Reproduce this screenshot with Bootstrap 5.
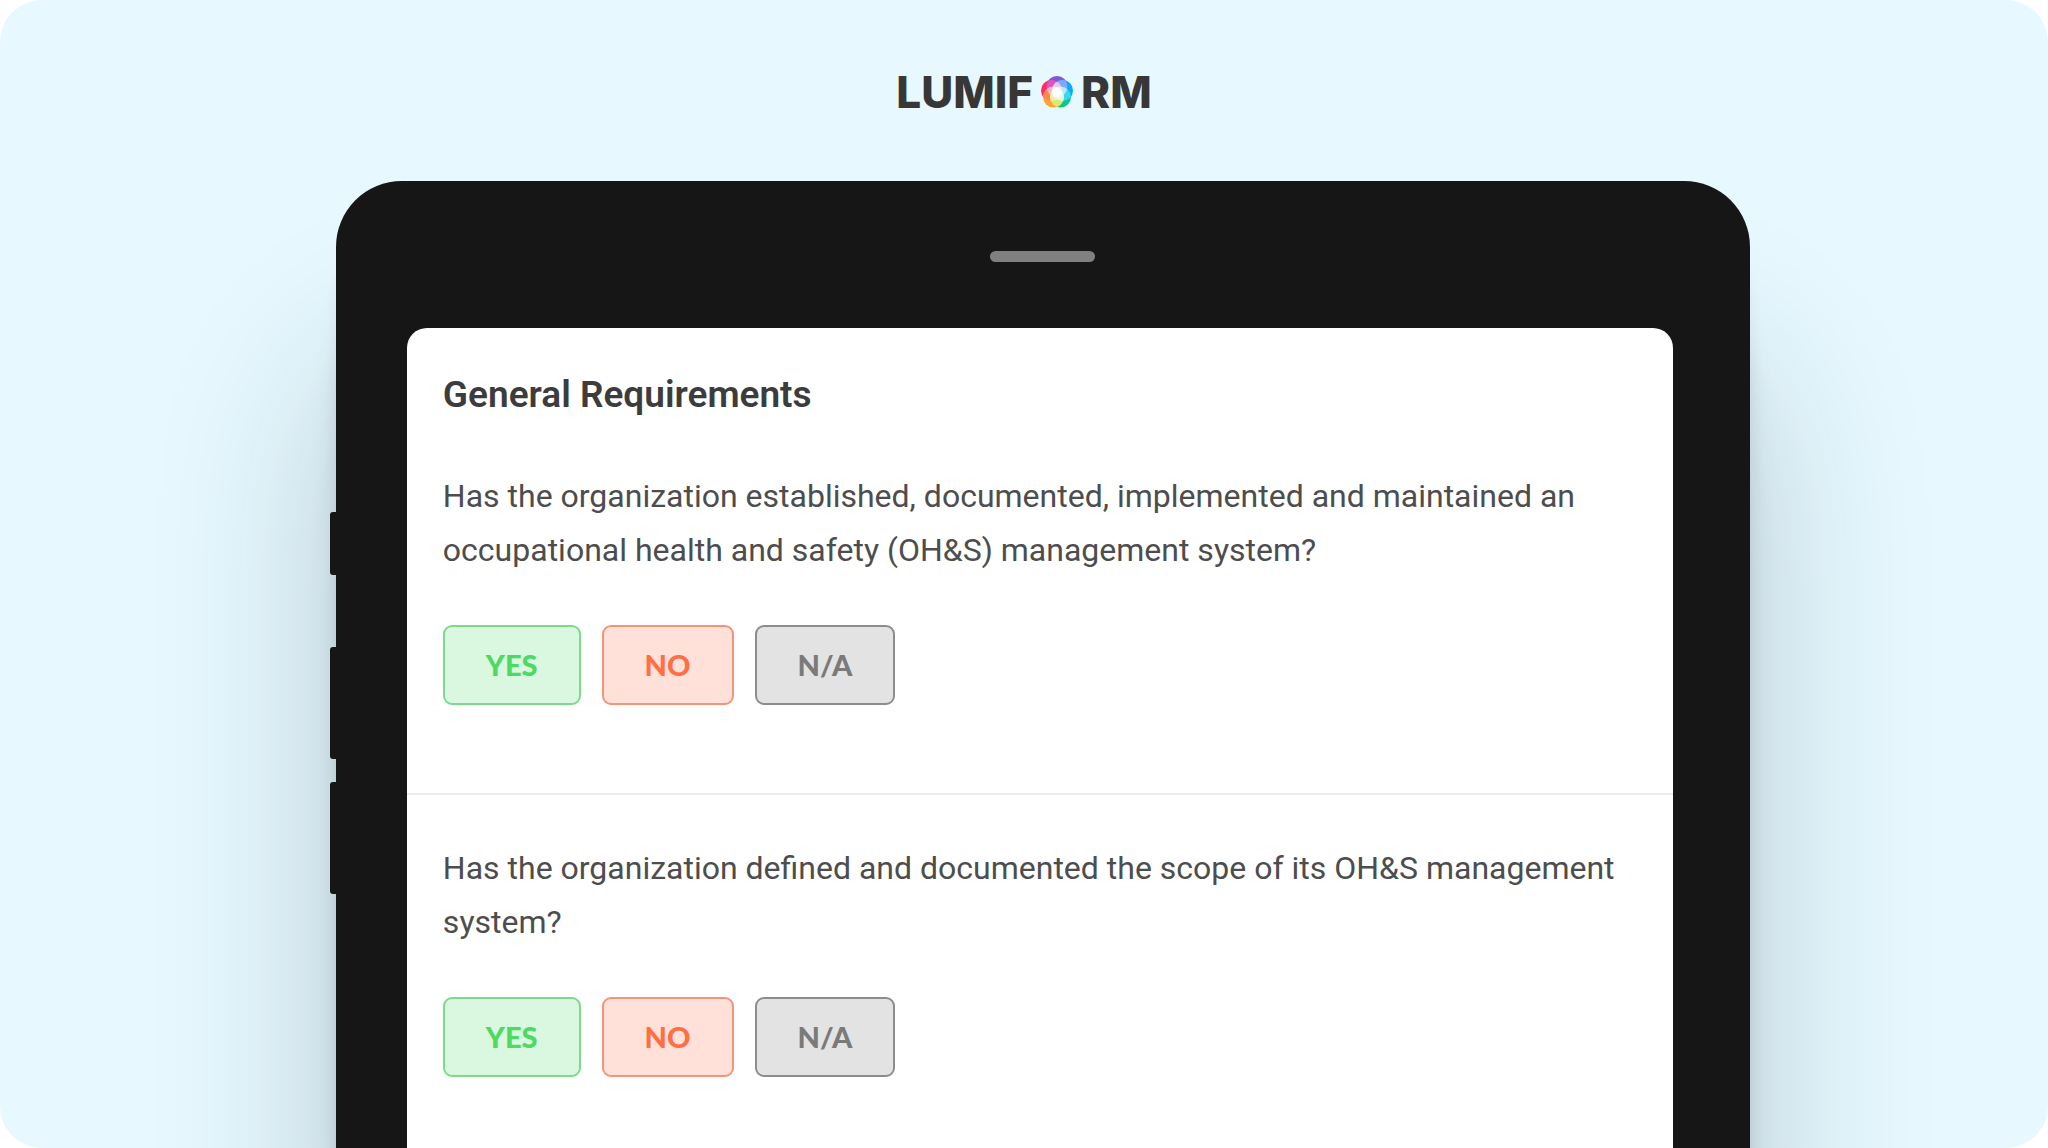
<!DOCTYPE html>
<html lang="en">
<head>
<meta charset="utf-8">
<meta name="viewport" content="width=device-width, initial-scale=1">
<title>Lumiform – General Requirements</title>
<link rel="stylesheet" href="https://cdn.jsdelivr.net/npm/bootstrap@5.3.0/dist/css/bootstrap.min.css">
<style>
  body { background: #fff; font-family: Roboto, "Liberation Sans", sans-serif; color: #4d4d4d; }
  .stage { background: #e7f8ff; border-radius: 42px; }
  .brand { font: 800 44px/54px Inter, sans-serif; color: #373737; padding: 65px 0 62px; }
  .brand svg { width: 32px; height: 34px; margin: 0 8px; }
  .tablet { margin: 0 14.55% 0 16.4%; padding-top: 70px; background: #161616; border-radius: 66px 66px 0 0;
    box-shadow: 0 130px 40px -18px rgba(20, 40, 45, .22), 0 190px 180px 0 rgba(30, 50, 60, .24), 0 60px 20px -8px rgba(20, 40, 45, .16); }
  .speaker { width: 105px; height: 11px; background: #808080; margin-bottom: 66px; }
  .side-keys { left: -6px; top: 331px; width: 12px; }
  .side-keys span { background: #161616; border-radius: 3px; height: 112px; margin-bottom: 23px; }
  .side-keys span:first-child { height: 63px; margin-bottom: 72px; }
  .screen { margin: 0 77px 0 71px; border-radius: 20px 20px 0 0; }
  .heading { font-size: 37px; line-height: 48px; font-weight: 600; color: #3c3c3c; margin-bottom: 50px; }
  .entry { padding: 46px 36px 88px; }
  .entry:first-child { padding-top: 43px; }
  .entry + .entry { border-top: 2px solid #ebebeb; }
  .question { font-size: 32px; line-height: 54px; margin-bottom: 48px; }
  .answers { gap: 21px; }
  .answer { font: 900 29px/36px Lato, sans-serif; padding: 20px 41px; border: 2px solid; border-radius: 9px; }
  .answer-yes, .answer-yes:hover { color: #4cd964; background: #daf7df; border-color: #7bdb8c; }
  .answer-no, .answer-no:hover { color: #ff6f43; background: #ffe1d9; border-color: #f59478; }
  .answer-na, .answer-na:hover { color: #7a7a7a; background: #e3e3e3; border-color: #8d8d8d; }
</style>
<script src="https://cdn.jsdelivr.net/npm/bootstrap@5.3.0/dist/js/bootstrap.bundle.min.js"></script>
</head>
<body>
<div class="stage min-vh-100 d-flex flex-column overflow-hidden">
  <header class="brand d-flex justify-content-center align-items-center">
    <span>LUMIF</span>
    <svg viewBox="0 0 32 34" role="img" aria-label="O">
      <defs>
        <clipPath id="top"><circle cx="16" cy="11.500" r="10.500"/></clipPath>
        <clipPath id="left"><circle cx="10.500" cy="15.500" r="10.500"/></clipPath>
        <clipPath id="right"><circle cx="21.500" cy="15.500" r="10.500"/></clipPath>
        <clipPath id="lowright"><circle cx="19.500" cy="22" r="10.500"/></clipPath>
      </defs>
      <circle cx="16" cy="11.500" r="10.500" fill="#8157d2"/>
      <circle cx="10.500" cy="15.500" r="10.500" fill="#fb2d63"/>
      <circle cx="21.500" cy="15.500" r="10.500" fill="#00adff"/>
      <circle cx="19.500" cy="22" r="10.500" fill="#0ac789"/>
      <circle cx="12.500" cy="22" r="10.500" fill="#ffa52f"/>
      <circle cx="10.500" cy="15.500" r="10.500" fill="#dc55c6" clip-path="url(#top)"/>
      <circle cx="21.500" cy="15.500" r="10.500" fill="#87a4ff" clip-path="url(#top)"/>
      <circle cx="12.500" cy="22" r="10.500" fill="#ff874b" clip-path="url(#left)"/>
      <circle cx="19.500" cy="22" r="10.500" fill="#38d5f4" clip-path="url(#right)"/>
      <circle cx="12.500" cy="22" r="10.500" fill="#dce96c" clip-path="url(#lowright)"/>
      <circle cx="21.500" cy="15.500" r="10.500" fill="#e6c5ff" clip-path="url(#left)"/>
      <circle cx="12.500" cy="22" r="10.500" fill="#ffb5c4" clip-path="url(#top)"/>
      <circle cx="19.500" cy="22" r="10.500" fill="#bfe4ff" clip-path="url(#top)"/>
      <circle cx="19.500" cy="22" r="10.500" fill="#ffe9b0" clip-path="url(#left)"/>
      <circle cx="12.500" cy="22" r="10.500" fill="#e3fbe5" clip-path="url(#right)"/>
      <circle cx="16" cy="17.500" r="5" fill="#fff"/>
    </svg>
    <span>RM</span>
  </header>

  <main class="tablet position-relative flex-grow-1 d-flex flex-column">
    <div class="side-keys position-absolute d-flex flex-column" aria-hidden="true">
      <span></span><span></span><span></span>
    </div>
    <div class="speaker rounded-pill mx-auto"></div>
    <div class="screen bg-white flex-grow-1">
      <section class="entry">
        <h1 class="heading">General Requirements</h1>
        <p class="question">Has the organization established, documented, implemented and maintained an occupational health and safety (OH&amp;S) management system?</p>
        <div class="answers d-flex flex-wrap">
          <button type="button" class="btn answer answer-yes">YES</button>
          <button type="button" class="btn answer answer-no">NO</button>
          <button type="button" class="btn answer answer-na">N/A</button>
        </div>
      </section>
      <section class="entry pb-0">
        <p class="question">Has the organization defined and documented the scope of its OH&amp;S management system?</p>
        <div class="answers d-flex flex-wrap">
          <button type="button" class="btn answer answer-yes">YES</button>
          <button type="button" class="btn answer answer-no">NO</button>
          <button type="button" class="btn answer answer-na">N/A</button>
        </div>
      </section>
    </div>
  </main>
</div>
</body>
</html>
